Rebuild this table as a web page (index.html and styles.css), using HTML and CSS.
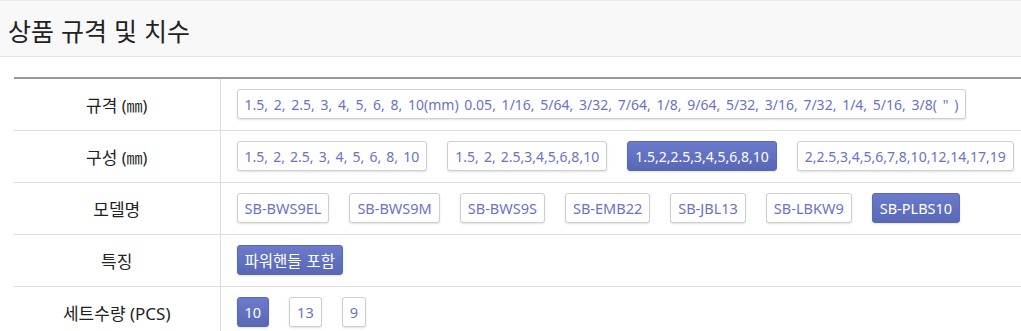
FILE: index.html
```html
<!DOCTYPE html>
<html lang="ko">
<head>
<meta charset="utf-8">
<link rel="stylesheet" href="styles.css">
</head>
<body>
<section class="panel">
  <header class="panel-head"><h2 class="panel-title">상품 규격 및 치수</h2></header>
  <div class="panel-body">
    <table class="spec">
      <colgroup><col class="col-label"><col class="col-value"></colgroup>
      <tbody>
        <tr>
          <th class="spec-label">규격 <span class="unit">(㎜)</span></th>
          <td class="spec-value"><div class="opts"><span class="opt long">1.5, 2, 2.5, 3, 4, 5, 6, 8, 10(mm) 0.05, 1/16, 5/64, 3/32, 7/64, 1/8, 9/64, 5/32, 3/16, 7/32, 1/4, 5/16, 3/8( " )</span></div></td>
        </tr>
        <tr>
          <th class="spec-label">구성 <span class="unit">(㎜)</span></th>
          <td class="spec-value"><div class="opts">
            <span class="opt">1.5, 2, 2.5, 3, 4, 5, 6, 8, 10</span>
            <span class="opt">1.5, 2, 2.5,3,4,5,6,8,10</span>
            <span class="opt active">1.5,2,2.5,3,4,5,6,8,10</span>
            <span class="opt">2,2.5,3,4,5,6,7,8,10,12,14,17,19</span>
          </div></td>
        </tr>
        <tr>
          <th class="spec-label">모델명</th>
          <td class="spec-value"><div class="opts">
            <span class="opt model">SB-BWS9EL</span>
            <span class="opt model">SB-BWS9M</span>
            <span class="opt model">SB-BWS9S</span>
            <span class="opt model">SB-EMB22</span>
            <span class="opt model">SB-JBL13</span>
            <span class="opt model">SB-LBKW9</span>
            <span class="opt model active">SB-PLBS10</span>
          </div></td>
        </tr>
        <tr>
          <th class="spec-label">특징</th>
          <td class="spec-value"><div class="opts"><span class="opt feature active">파워핸들 포함</span></div></td>
        </tr>
        <tr>
          <th class="spec-label">세트수량 (PCS)</th>
          <td class="spec-value"><div class="opts">
            <span class="opt count active">10</span>
            <span class="opt count">13</span>
            <span class="opt count">9</span>
          </div></td>
        </tr>
      </tbody>
    </table>
  </div>
</section>
</body>
</html>
```
FILE: styles.css
```css
html, body {
  margin: 0;
  padding: 0;
  background: #fff;
}
body {
  font-family: "Noto Sans", "Noto Sans CJK KR", sans-serif;
  color: #222;
}
.panel-head {
  background: #f8f8f8;
  border-top: 1px solid #ececec;
  border-bottom: 1px solid #e6e6e6;
  height: 55px;
  display: flex;
  align-items: center;
  padding-left: 8px;
}
.panel-title {
  margin: 0;
  font-family: "Noto Sans CJK KR", sans-serif;
  font-weight: 400;
  font-size: 25px;
  color: #222;
  position: relative;
  top: 1px;
}
.panel-body {
  padding: 20px 0 0 14px;
}
.spec {
  width: 100%;
  table-layout: fixed;
  border-collapse: collapse;
  border-top: 2px solid #999;
}
.col-label {
  width: 206px;
}
.spec tr {
  height: 52px;
  border-bottom: 1px solid #ddd;
}
.spec-label {
  border-right: 1px solid #ddd;
  font-family: "Noto Sans", "Noto Sans CJK KR", sans-serif;
  font-weight: 400;
  font-size: 17px;
  color: #222;
  text-align: center;
  padding: 0;
}
.unit {
  font-size: 16px;
}
.spec-value {
  padding: 0 0 0 16px;
  overflow: hidden;
}
.opts {
  display: flex;
  gap: 20px;
  align-items: center;
}
.opt {
  display: inline-flex;
  align-items: center;
  height: 28px;
  padding: 0 7px;
  border: 1px solid #cfcfcf;
  border-radius: 3px;
  background: #fff;
  color: #6a73c3;
  font-size: 14px;
  word-spacing: 1.5px;
  white-space: nowrap;
  box-shadow: 0 1px 2px rgba(0, 0, 0, 0.12);
  font-family: "Noto Sans", "Noto Sans CJK KR", sans-serif;
}
.opt.long {
  word-spacing: 2.1px;
}
.opt.model {
  padding: 0 7px;
  font-size: 14.5px;
}
.opt.feature {
  font-size: 15.5px;
  word-spacing: 1px;
}
.opt.count {
  padding: 0 7px;
  font-size: 14.5px;
}
.opt.active {
  background: linear-gradient(#6b7acb, #5868b6);
  border-color: #5a69b6;
  color: #fff;
}
```
